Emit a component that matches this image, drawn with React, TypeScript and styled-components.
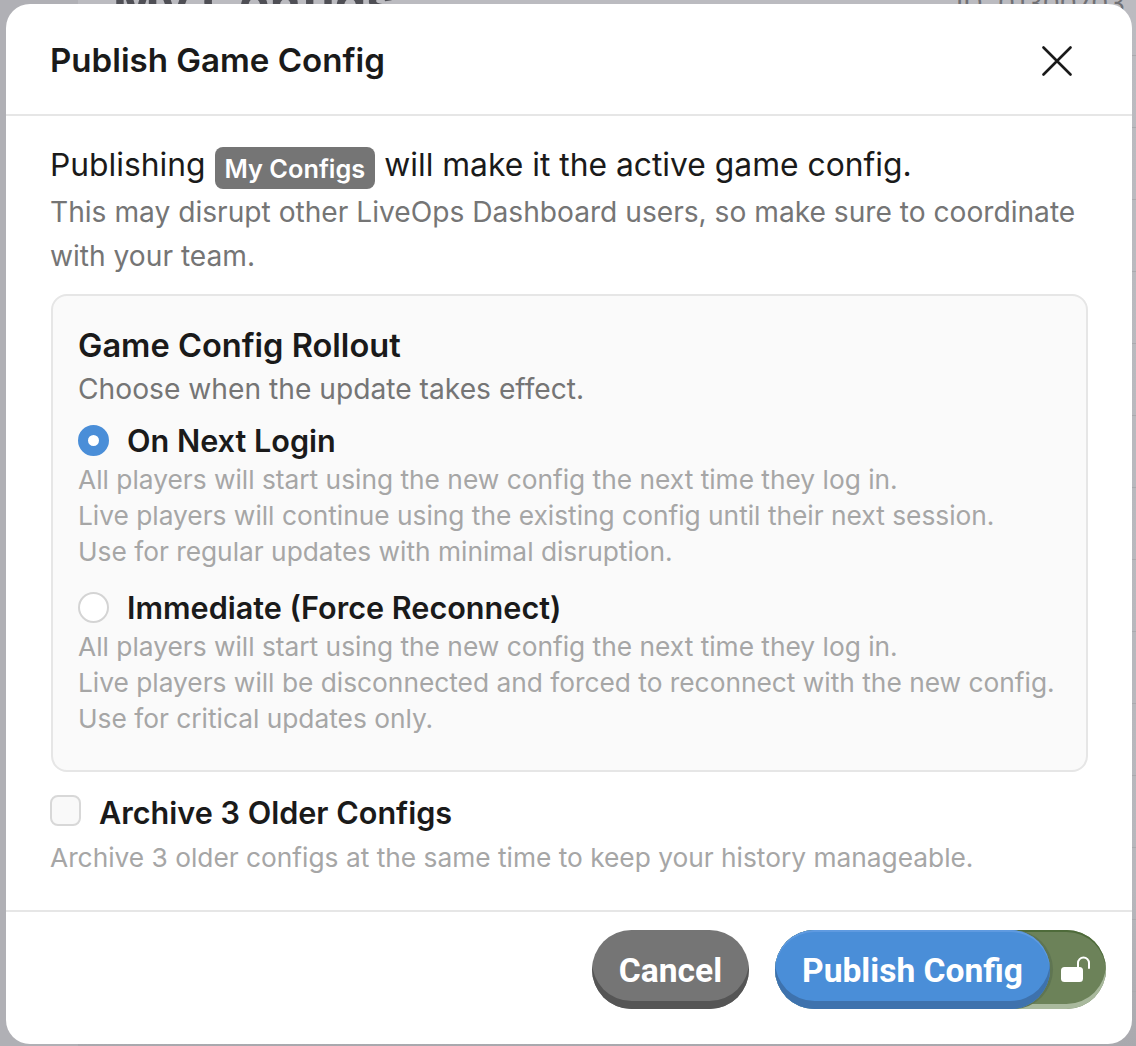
import React from 'react';
import styled, { createGlobalStyle } from 'styled-components';

const GlobalStyle = createGlobalStyle`
  html, body {
    margin: 0;
    padding: 0;
    background: #b9b9be;
  }
  * {
    box-sizing: border-box;
  }
`;

const Page = styled.div`
  position: relative;
  width: 1136px;
  height: 1046px;
  overflow: hidden;
  font-family: Inter, 'Noto Sans', sans-serif;
  background: linear-gradient(#bbbbc0, #b7b7bc 85%, #a9a9ae);
`;

const BackdropSidebar = styled.div`
  position: absolute;
  left: 0;
  top: 0;
  bottom: 0;
  width: 78px;
  background: #b0b0b5;
`;

const BackdropRows = styled.div`
  position: absolute;
  right: 0;
  top: 55px;
  bottom: 0;
  width: 4px;
  background: repeating-linear-gradient(#aaaaae 0 1px, transparent 1px 72px);
`;

const BackdropTitle = styled.div`
  position: absolute;
  left: 113px;
  top: -28px;
  font-size: 50px;
  font-weight: 700;
  white-space: nowrap;
  color: #4f4f55;
`;

const BackdropId = styled.div`
  position: absolute;
  left: 956px;
  top: -13px;
  font-size: 27px;
  white-space: nowrap;
  color: #707074;
`;

const Modal = styled.div`
  position: absolute;
  left: 6px;
  top: 4px;
  width: 1126px;
  height: 1040px;
  display: flex;
  flex-direction: column;
  background: #fff;
  border-radius: 24px;
`;

const Header = styled.header`
  height: 112px;
  display: flex;
  align-items: center;
  justify-content: space-between;
  padding: 1px 60px 0 44px;
  border-bottom: 2px solid #e6e6e6;
`;

const Title = styled.h1`
  margin: 0;
  font-size: 33.1px;
  font-weight: 600;
  color: #1a1a1a;
`;

const CloseIcon = styled.svg`
  display: block;
  width: 30px;
  height: 30px;
  margin-top: 2px;
`;

const Body = styled.div`
  flex: 1;
  padding: 26px 44px 0 45px;
`;

const Lead = styled.div`
  display: flex;
  align-items: center;
  gap: 9.5px;
  height: 44px;
  margin-left: -1px;
  font-size: 31.8px;
  color: #1a1a1a;
`;

const Tag = styled.span`
  display: inline-block;
  margin-top: 8px;
  padding: 0 9.5px;
  height: 42px;
  line-height: 44px;
  font-size: 25.3px;
  font-weight: 600;
  color: #fff;
  background: #757575;
  border-radius: 8px;
`;

const Note = styled.p`
  margin: 4px 0 16px -1px;
  font-size: 28.15px;
  line-height: 44px;
  color: #757575;
`;

const Card = styled.section`
  height: 478px;
  padding: 28px 25px 0;
  background: #fafafa;
  border: 2px solid #e6e6e6;
  border-radius: 16px;
`;

const CardTitle = styled.h2`
  margin: 0;
  font-size: 32.6px;
  line-height: 42px;
  font-weight: 600;
  color: #1a1a1a;
`;

const CardNote = styled.p`
  margin: 2px 0 7px;
  font-size: 28.2px;
  line-height: 43px;
  color: #757575;
`;

const Option = styled.div`
  margin-bottom: 15px;
`;

const OptionRow = styled.div`
  display: flex;
  align-items: center;
  gap: 18px;
  height: 44px;
`;

const Label = styled.span`
  font-size: 30.6px;
  font-weight: 600;
  color: #1a1a1a;
`;

const Radio = styled.span<{ $checked?: boolean }>`
  width: 31px;
  height: 31px;
  border-radius: 50%;
  background: #fff;
  border: ${(props) => (props.$checked ? '10px solid #4a8ed8' : '2px solid #d4d4d4')};
`;

const Hint = styled.p`
  margin: 0;
  font-size: 26.3px;
  line-height: 36px;
  color: #a6a6a6;
`;

const CheckRow = styled.div`
  display: flex;
  align-items: center;
  gap: 18px;
  height: 44px;
  margin-top: 18px;
`;

const CheckBox = styled.span`
  width: 31px;
  height: 31px;
  margin: 0 0 3px -1px;
  background: #f9f9f9;
  border: 2px solid #d8d8d8;
  border-radius: 8px;
`;

const CheckHint = styled(Hint)`
  line-height: 44px;
  margin-top: 2px;
  margin-left: -1px;
`;

const Footer = styled.footer`
  height: 134px;
  display: flex;
  justify-content: flex-end;
  gap: 26px;
  padding: 18px 26px 0 0;
  border-top: 2px solid #e6e6e6;
`;

const Pill = styled.button<{ $color: string; $edge: string }>`
  width: 157px;
  height: 79px;
  border: 0;
  padding: 2px 0 0;
  border-radius: 40px;
  font-family: Roboto, Inter, sans-serif;
  font-size: 33.6px;
  font-weight: 700;
  color: #fff;
  background: ${(props) => props.$color};
  box-shadow: inset 0 -8px 0 ${(props) => props.$edge};
`;

const PublishWrap = styled.div`
  position: relative;
  width: 331px;
  height: 79px;
  border-radius: 40px;
  background: #6c8259;
  box-shadow: inset 0 2px 0 #4e6b3a, inset 0 -5px 0 #a9b99d;
`;

const PublishButton = styled(Pill)`
  position: absolute;
  left: 0;
  top: 0;
  width: 275px;
  box-shadow: inset 0 -8px 0 #3e72ad, inset 0 2px 0 #5f9ae0, 3px 0 0 0 #5f7552;
`;

const LockIcon = styled.svg`
  position: absolute;
  right: 14px;
  top: 25px;
  width: 34px;
  height: 30px;
`;

export default function App() {
  return (
    <Page>
      <GlobalStyle />
      <BackdropSidebar />
      <BackdropRows />
      <BackdropTitle>My Configs</BackdropTitle>
      <BackdropId>ID: 01300703</BackdropId>
      <Modal>
        <Header>
          <Title>Publish Game Config</Title>
          <CloseIcon viewBox="0 0 30 30" fill="none" stroke="#1a1a1a" strokeWidth="2.6" strokeLinecap="round">
            <path d="M1.5 1.5L28.5 28.5M28.5 1.5L1.5 28.5" />
          </CloseIcon>
        </Header>
        <Body>
          <Lead>
            <span>Publishing</span>
            <Tag>My Configs</Tag>
            <span>will make it the active game config.</span>
          </Lead>
          <Note>
            This may disrupt other LiveOps Dashboard users, so make sure to coordinate with your team.
          </Note>
          <Card>
            <CardTitle>Game Config Rollout</CardTitle>
            <CardNote>Choose when the update takes effect.</CardNote>
            <Option>
              <OptionRow>
                <Radio $checked />
                <Label>On Next Login</Label>
              </OptionRow>
              <Hint>All players will start using the new config the next time they log in.</Hint>
              <Hint>Live players will continue using the existing config until their next session.</Hint>
              <Hint>Use for regular updates with minimal disruption.</Hint>
            </Option>
            <Option>
              <OptionRow>
                <Radio />
                <Label>Immediate (Force Reconnect)</Label>
              </OptionRow>
              <Hint>All players will start using the new config the next time they log in.</Hint>
              <Hint>Live players will be disconnected and forced to reconnect with the new config.</Hint>
              <Hint>Use for critical updates only.</Hint>
            </Option>
          </Card>
          <CheckRow>
            <CheckBox />
            <Label>Archive 3 Older Configs</Label>
          </CheckRow>
          <CheckHint>Archive 3 older configs at the same time to keep your history manageable.</CheckHint>
        </Body>
        <Footer>
          <Pill $color="#757575" $edge="#555555">Cancel</Pill>
          <PublishWrap>
            <PublishButton $color="#4a8ed8" $edge="#3e72ad">Publish Config</PublishButton>
            <LockIcon viewBox="0 0 34 30" fill="none">
              <rect x="3" y="12" width="22" height="15" rx="3.5" fill="#fff" />
              <path d="M20 13V8a5.5 5.5 0 0 1 11 0v5" stroke="#fff" strokeWidth="2" strokeLinecap="round" />
            </LockIcon>
          </PublishWrap>
        </Footer>
      </Modal>
    </Page>
  );
}
